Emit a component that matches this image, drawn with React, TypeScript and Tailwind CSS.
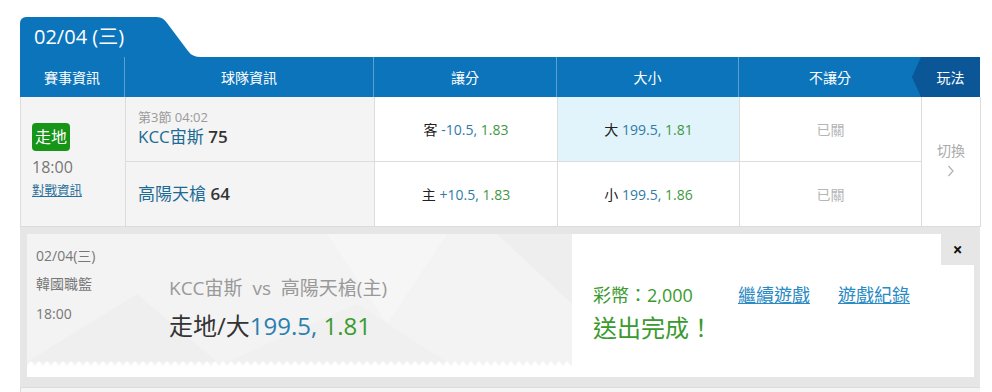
import React from "react";

const font = { fontFamily: '"Open Sans", "Noto Sans CJK TC", sans-serif' };

function Odds({ side, line, price }: { side: string; line: string; price: string }) {
  return (
    <span className="text-[14px]">
      <span className="text-[#222]">{side}</span>{" "}
      <span className="text-[#2f7ba6]">{line},</span>{" "}
      <span className="text-[#3f983f]">{price}</span>
    </span>
  );
}

export default function App() {
  return (
    <div className="w-[992px] h-[392px] bg-white overflow-hidden" style={font}>
      <div className="ml-[20px] pt-[17px] w-[960px]">
        {/* Date tab */}
        <div className="flex h-[40px]">
          <div className="w-[135px] bg-[#0c74bb] rounded-tl-[6px] flex items-center pl-[14px] text-white text-[20px]">
            02/04 (三)
          </div>
          <svg width="46" height="40" viewBox="0 0 46 40" className="block">
            <path d="M0 0 L2 0 Q8 0 12 6 L33 34 Q37 40 46 40 L0 40 Z" fill="#0c74bb" />
          </svg>
        </div>

        {/* Header */}
        <div className="flex h-[40px] bg-[#0c74bb] text-white text-[14px]">
          <div className="w-[105px] flex items-center justify-center border-r border-[#5e9fd0]">賽事資訊</div>
          <div className="w-[249px] flex items-center justify-center border-r border-[#5e9fd0]">球隊資訊</div>
          <div className="w-[183px] flex items-center justify-center border-r border-[#5e9fd0]">讓分</div>
          <div className="w-[182px] flex items-center justify-center border-r border-[#5e9fd0]">大小</div>
          <div className="w-[173px] flex items-center justify-center pl-[9px]">不讓分</div>
          <div className="w-[68px] flex items-center justify-center pl-[9px] bg-[#0a5697] [clip-path:polygon(9px_0,100%_0,100%_100%,9px_100%,0_50%)]">
            玩法
          </div>
        </div>

        {/* Body */}
        <div className="grid grid-cols-[105px_249px_183px_182px_182px_59px] grid-rows-[65px_65px] border-l border-[#dcdcdc]">
          <div className="row-span-2 bg-[#f4f4f4] border-r border-b border-[#dcdcdc] flex flex-col justify-center pl-[11px] pt-[3px]">
            <span className="w-[38px] h-[28px] rounded-[4px] bg-[#169516] text-white text-[16px] flex items-center justify-center">
              走地
            </span>
            <span className="mt-[4px] text-[16px] text-[#777] leading-[24px]">18:00</span>
            <a className="text-[12.5px] text-[#2a6f9a] underline leading-[24px]">對戰資訊</a>
          </div>

          <div className="bg-[#f4f4f4] border-r border-b border-[#dcdcdc] flex flex-col justify-center pl-[12px]">
            <span className="text-[13px] text-[#9a9a9a] leading-[16px]">第3節 04:02</span>
            <span className="text-[17px] text-[#1c6b94] leading-[24px]">
              KCC宙斯 <b className="font-semibold text-[#333]">75</b>
            </span>
          </div>
          <div className="border-r border-b border-[#dcdcdc] flex items-center justify-center">
            <Odds side="客" line="-10.5" price="1.83" />
          </div>
          <div className="bg-[#e1f3fb] border-r border-b border-[#dcdcdc] flex items-center justify-center">
            <Odds side="大" line="199.5" price="1.81" />
          </div>
          <div className="border-r border-b border-[#dcdcdc] flex items-center justify-center text-[14px] text-[#b5b5b5]">
            已關
          </div>
          <div className="row-span-2 border-r border-b border-[#dcdcdc] flex flex-col items-center justify-center text-[#aaa] pb-[6px]">
            <span className="text-[14px] leading-[20px]">切換</span>
            <svg width="8" height="12" viewBox="0 0 8 12" className="mt-[4px]">
              <path d="M1.5 1 L6 6 L1.5 11" fill="none" stroke="#b0b0b0" strokeWidth="1.2" />
            </svg>
          </div>

          <div className="bg-[#f4f4f4] border-r border-b border-[#dcdcdc] flex items-center pl-[12px]">
            <span className="text-[17px] text-[#1c6b94]">
              高陽天槍 <b className="font-semibold text-[#333]">64</b>
            </span>
          </div>
          <div className="border-r border-b border-[#dcdcdc] flex items-center justify-center">
            <Odds side="主" line="+10.5" price="1.83" />
          </div>
          <div className="border-r border-b border-[#dcdcdc] flex items-center justify-center">
            <Odds side="小" line="199.5" price="1.86" />
          </div>
          <div className="border-r border-b border-[#dcdcdc] flex items-center justify-center text-[14px] text-[#b5b5b5]">
            已關
          </div>
        </div>

        {/* Bet receipt */}
        <div className="bg-[#e6e6e6] pl-[7px] pr-[6px] pt-[7px] pb-[10px]">
          <div className="relative bg-white h-[143px] flex">
            <div className="relative w-[545px] h-[132px] bg-[#f3f3f3] flex">
              <svg className="absolute inset-0" width="545" height="128" viewBox="0 0 545 128">
                <polygon points="0,128 110,60 190,128" fill="#efefef" />
                <polygon points="300,0 420,0 360,90" fill="#f6f6f6" />
                <polygon points="470,0 545,0 545,70" fill="#eeeeee" />
                <polygon points="200,128 330,70 420,128" fill="#f0f0f0" />
              </svg>
              <svg className="absolute left-0 bottom-0" width="545" height="6" viewBox="0 0 545 6" preserveAspectRatio="none">
                <path
                  d={
                    "M0 6 " +
                    Array.from({ length: 69 }, (_, i) => `L${i * 8 + 4} 1 L${i * 8 + 8} 6`).join(" ") +
                    " Z"
                  }
                  fill="#ffffff"
                />
              </svg>
              <div className="relative w-[142px] pl-[9px] pt-[12px] flex flex-col gap-[8px] text-[14px] text-[#777] leading-[20px]">
                <span>02/04(三)</span>
                <span>韓國職籃</span>
                <span className="mt-[2px]">18:00</span>
              </div>
              <div className="relative pt-[42px] flex flex-col">
                <span className="text-[19px] text-[#999] leading-[24px]">
                  KCC宙斯&nbsp;&nbsp;vs&nbsp;&nbsp;高陽天槍(主)
                </span>
                <span className="mt-[10px] text-[24px] text-[#333] leading-[32px]">
                  走地/大<span className="text-[#2a7fb0]">199.5,</span>{" "}
                  <span className="text-[#3a9a2e]">1.81</span>
                </span>
              </div>
            </div>

            <div className="pl-[21px] pt-[49px] flex flex-col">
              <div className="flex items-center text-[18px] leading-[24px]">
                <span className="w-[145px] text-[#3a9a2e]">彩幣：2,000</span>
                <a className="text-[#2a8ac4] underline">繼續遊戲</a>
                <a className="ml-[28px] text-[#2a8ac4] underline">遊戲紀錄</a>
              </div>
              <span className="mt-[6px] text-[24px] text-[#3a9a2e] leading-[30px]">送出完成！</span>
            </div>

            <button className="absolute top-0 right-0 w-[33px] h-[31px] bg-[#e6e6e6] flex items-center justify-center text-[17px] font-bold text-[#111]">
              ×
            </button>
          </div>
        </div>
        <div className="h-[6px] bg-[#f5f5f5] border-t border-l border-[#dcdcdc]" />
      </div>
    </div>
  );
}
